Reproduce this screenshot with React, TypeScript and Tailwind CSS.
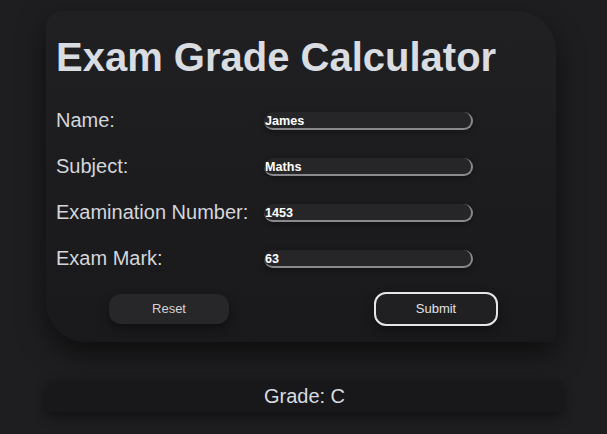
import React from "react";

const rows = [
  { label: "Name:", value: "James" },
  { label: "Subject:", value: "Maths" },
  { label: "Examination Number:", value: "1453" },
  { label: "Exam Mark:", value: "63" },
];

export default function App() {
  return (
    <div className="min-h-screen w-full overflow-hidden bg-[#1e1e20] pt-[11px] font-['Liberation_Sans',Arial,sans-serif]">
      <div className="ml-[46px] w-[510px] h-[331px] rounded-tl-[16px] rounded-tr-[40px] rounded-bl-[40px] rounded-br-[8px] bg-gradient-to-b from-[#202022] to-[#19191b] shadow-[0_12px_28px_rgba(0,0,0,0.55)] px-[10px] pt-[23px]">
        <h1 className="text-[40px] font-bold leading-[46px] text-[#d9dce1]">
          Exam Grade Calculator
        </h1>
        <div className="mt-[28px] flex flex-col gap-[23px]">
          {rows.map((r) => (
            <div key={r.label} className="flex h-[23px] items-start">
              <label className="w-[208px] pt-[1px] text-[20px] leading-[23px] text-[#d3d6db]">
                {r.label}
              </label>
              <input
                readOnly
                value={r.value}
                className="mt-[4px] h-[18px] w-[209px] rounded-[10px] border-0 border-b-2 border-r-2 border-solid border-[#8a8a8c] bg-[#262628] pl-[1px] pt-[2px] text-[12.6px] font-bold leading-[14px] text-white outline-none shadow-[0_2px_6px_rgba(0,0,0,0.35)]"
              />
            </div>
          ))}
        </div>
        <div className="mt-[23px] flex h-[34px] items-center">
          <button className="ml-[53px] h-[30px] w-[120px] rounded-[12px] bg-[#27272a] text-[13px] text-[#d4d4d6] shadow-[0_4px_10px_rgba(0,0,0,0.4)]">
            Reset
          </button>
          <button className="ml-[145px] h-[34px] w-[124px] rounded-[12px] border-2 border-solid border-[#e6e6e8] bg-[#202023] text-[13px] text-[#e2e2e4] shadow-[0_4px_10px_rgba(0,0,0,0.4)]">
            Submit
          </button>
        </div>
      </div>
      <div className="ml-[46px] mt-[39px] flex h-[31px] w-[517px] items-center justify-center rounded-[4px] bg-[#18181a] shadow-[0_4px_12px_rgba(0,0,0,0.45)]">
        <span className="text-[20px] leading-[23px] text-[#d8dce1]">Grade: C</span>
      </div>
    </div>
  );
}
